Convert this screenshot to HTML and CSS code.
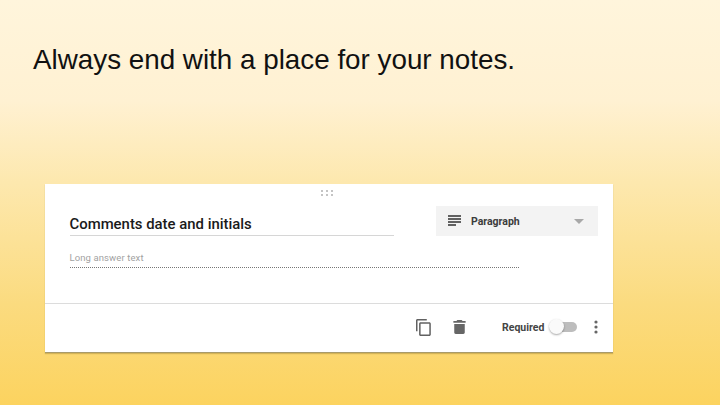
FILE: index.html
```html
<!DOCTYPE html>
<html lang="en">
<head>
<meta charset="utf-8">
<title>Notes</title>
<link rel="stylesheet" href="styles.css">
</head>
<body>
<main class="slide">
  <h1 class="slide-title">Always end with a place for your notes.</h1>
  <section class="card">
    <div class="drag" aria-hidden="true">
      <svg width="12" height="6" viewBox="0 0 12 6"><g fill="#c4c4c4"><rect x="0" y="0" width="2" height="2"/><rect x="5" y="0" width="2" height="2"/><rect x="10" y="0" width="2" height="2"/><rect x="0" y="4" width="2" height="2"/><rect x="5" y="4" width="2" height="2"/><rect x="10" y="4" width="2" height="2"/></g></svg>
    </div>
    <div class="top-row">
      <div class="question">Comments date and initials</div>
      <div class="type-select">
        <svg class="type-icon" width="13" height="12" viewBox="0 0 13 12"><g fill="#616161"><rect y="0" width="13" height="2"/><rect y="3" width="13" height="2"/><rect y="6" width="13" height="2"/><rect y="9" width="8" height="2"/></g></svg>
        <span class="type-label">Paragraph</span>
        <svg class="type-arrow" width="10" height="5" viewBox="0 0 10 5"><path d="M0 0h10L5 5z" fill="#a8a8a8"/></svg>
      </div>
    </div>
    <div class="answer">Long answer text</div>
    <div class="actions">
      <svg class="copy" width="15" height="17" viewBox="0 0 16 18"><path d="M11.500 0H1.600C.7 0 0 .7 0 1.600V13h1.600V1.600h9.900zM14.200 3.300H4.900c-.9 0-1.600.7-1.600 1.600v11.500c0 .9.700 1.600 1.600 1.600h9.300c.9 0 1.600-.7 1.600-1.600V4.900c0-.9-.7-1.600-1.600-1.600zm0 13.100H4.900V4.900h9.300z" fill="#616161"/></svg>
      <svg class="trash" width="13" height="14" viewBox="0 0 14 16"><path d="M1 4.500h12V14.400c0 .9-.7 1.600-1.600 1.600H2.600C1.700 16 1 15.300 1 14.400zM14 1H10.500L9.500 0h-5l-1 1H0v2h14z" fill="#666"/></svg>
      <span class="req-label">Required</span>
      <span class="toggle"><span class="track"></span><span class="knob"></span></span>
      <svg class="more" width="4" height="14" viewBox="0 0 4 14"><g fill="#666"><circle cx="2" cy="2" r="1.600"/><circle cx="2" cy="7" r="1.600"/><circle cx="2" cy="12" r="1.600"/></g></svg>
    </div>
  </section>
</main>
</body>
</html>
```
FILE: styles.css
```css
html, body {
  margin: 0;
  padding: 0;
}
.slide {
  width: 720px;
  height: 405px;
  overflow: hidden;
  box-sizing: border-box;
  padding: 43px 0 0 33px;
  background: linear-gradient(180deg, #fff5dc 0%, #fff1d2 25%, #fde8ae 45%, #fbdb7f 75%, #fcd35f 100%);
  font-family: "Liberation Sans", Arial, sans-serif;
}
.slide-title {
  margin: 0;
  font-size: 27.800px;
  line-height: 34px;
  font-weight: 400;
  color: #111;
}
.card {
  width: 568px;
  height: 168px;
  margin: 107px 0 0 12px;
  background: #fff;
  border-bottom: 1px solid #a89a6a;
  box-shadow: 0 1px 1px rgba(90, 70, 10, .25);
  position: relative;
  display: flex;
  flex-direction: column;
  font-family: Roboto, "Liberation Sans", sans-serif;
}
.drag {
  position: absolute;
  top: 6px;
  left: 276px;
  line-height: 0;
}
.top-row {
  display: flex;
  justify-content: space-between;
  align-items: flex-start;
  padding: 22px 15px 0 24.500px;
}
.question {
  width: 324.500px;
  height: 30px;
  box-sizing: border-box;
  border-bottom: 1px solid #d6d6d6;
  font-size: 14.900px;
  font-weight: 500;
  line-height: 37px;
  color: #1a1a1a;
  white-space: nowrap;
}
.type-select {
  width: 162px;
  height: 30px;
  background: #f3f3f3;
  display: flex;
  align-items: center;
  box-sizing: border-box;
  padding: 0 14px 0 12px;
}
.type-label {
  margin-left: 10px;
  font-size: 10.500px;
  font-weight: 700;
  color: #3c3c3c;
  flex: 1;
}
.answer {
  width: 449px;
  margin: 15px 0 0 24.500px;
  height: 17px;
  box-sizing: border-box;
  border-bottom: 1px dotted #777;
  font-size: 9.500px;
  line-height: 14px;
  letter-spacing: .1px;
  color: #a2a2a2;
}
.actions {
  margin-top: 35px;
  border-top: 1px solid #dcdcdc;
  flex: 1;
  display: flex;
  align-items: center;
  padding: 0 0 2px 371px;
}
.trash {
  margin-left: 22px;
}
.req-label {
  margin-left: 36px;
  font-size: 10.500px;
  font-weight: 700;
  color: #444;
}
.toggle {
  margin-left: 5px;
  width: 28px;
  height: 16px;
  position: relative;
  display: block;
}
.track {
  position: absolute;
  left: 1px;
  top: 3px;
  width: 27px;
  height: 10px;
  border-radius: 5px;
  background: #bdbdbd;
}
.knob {
  position: absolute;
  left: 0;
  top: 0;
  width: 15px;
  height: 15px;
  border-radius: 50%;
  background: #fafafa;
  box-shadow: 0 1px 2px rgba(0, 0, 0, .35);
}
.more {
  margin-left: 17px;
}
```
